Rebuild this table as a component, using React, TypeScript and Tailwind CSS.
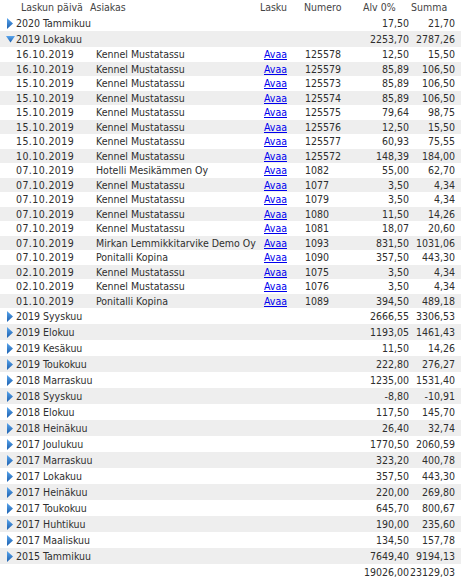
import React from "react";

type Detail = [string, string, string, string, string];
const top: [string, string, string, boolean][] = [
  ["2020 Tammikuu", "17,50", "21,70", false],
  ["2019 Lokakuu", "2253,70", "2787,26", true],
];
const details: Detail[] = [
  ["16.10.2019", "Kennel Mustatassu", "125578", "12,50", "15,50"],
  ["16.10.2019", "Kennel Mustatassu", "125579", "85,89", "106,50"],
  ["15.10.2019", "Kennel Mustatassu", "125573", "85,89", "106,50"],
  ["15.10.2019", "Kennel Mustatassu", "125574", "85,89", "106,50"],
  ["15.10.2019", "Kennel Mustatassu", "125575", "79,64", "98,75"],
  ["15.10.2019", "Kennel Mustatassu", "125576", "12,50", "15,50"],
  ["15.10.2019", "Kennel Mustatassu", "125577", "60,93", "75,55"],
  ["10.10.2019", "Kennel Mustatassu", "125572", "148,39", "184,00"],
  ["07.10.2019", "Hotelli Mesikämmen Oy", "1082", "55,00", "62,70"],
  ["07.10.2019", "Kennel Mustatassu", "1077", "3,50", "4,34"],
  ["07.10.2019", "Kennel Mustatassu", "1079", "3,50", "4,34"],
  ["07.10.2019", "Kennel Mustatassu", "1080", "11,50", "14,26"],
  ["07.10.2019", "Kennel Mustatassu", "1081", "18,07", "20,60"],
  ["07.10.2019", "Mirkan Lemmikkitarvike Demo Oy", "1093", "831,50", "1031,06"],
  ["07.10.2019", "Ponitalli Kopina", "1090", "357,50", "443,30"],
  ["02.10.2019", "Kennel Mustatassu", "1075", "3,50", "4,34"],
  ["02.10.2019", "Kennel Mustatassu", "1076", "3,50", "4,34"],
  ["01.10.2019", "Ponitalli Kopina", "1089", "394,50", "489,18"],
];
const months: [string, string, string][] = [
  ["2019 Syyskuu", "2666,55", "3306,53"],
  ["2019 Elokuu", "1193,05", "1461,43"],
  ["2019 Kesäkuu", "11,50", "14,26"],
  ["2019 Toukokuu", "222,80", "276,27"],
  ["2018 Marraskuu", "1235,00", "1531,40"],
  ["2018 Syyskuu", "-8,80", "-10,91"],
  ["2018 Elokuu", "117,50", "145,70"],
  ["2018 Heinäkuu", "26,40", "32,74"],
  ["2017 Joulukuu", "1770,50", "2060,59"],
  ["2017 Marraskuu", "323,20", "400,78"],
  ["2017 Lokakuu", "357,50", "443,30"],
  ["2017 Heinäkuu", "220,00", "269,80"],
  ["2017 Toukokuu", "645,70", "800,67"],
  ["2017 Huhtikuu", "190,00", "235,60"],
  ["2017 Maaliskuu", "134,50", "157,78"],
  ["2015 Tammikuu", "7649,40", "9194,13"],
];

function Arrow({ open }: { open: boolean }) {
  if (open)
    return (
      <svg width="9" height="7" viewBox="0 0 9 7" className="shrink-0">
        <defs>
          <linearGradient id="gd" x1="0" y1="0" x2="0" y2="1">
            <stop offset="0" stopColor="#5aa6ee" />
            <stop offset="1" stopColor="#1b5fae" />
          </linearGradient>
        </defs>
        <polygon points="0,0 9,0 4.5,6.5" fill="url(#gd)" />
      </svg>
    );
  return (
    <svg width="6" height="11" viewBox="0 0 6 11" className="shrink-0">
      <defs>
        <linearGradient id="gr" x1="0" y1="0" x2="0" y2="1">
          <stop offset="0" stopColor="#5aa6ee" />
          <stop offset="1" stopColor="#1b5fae" />
        </linearGradient>
      </defs>
      <polygon points="0,0 6,5.5 0,11" fill="url(#gr)" />
    </svg>
  );
}

function GroupRow({ label, a, b, open, gray }: { label: string; a: string; b: string; open: boolean; gray: boolean }) {
  return (
    <div className={`flex h-[16px] items-center ${gray ? "bg-[#eeeeee]" : "bg-white"}`}>
      <div className="flex w-[360px] items-center">
        <div className="flex w-[16px] items-center justify-center pl-[4px]">
          <Arrow open={open} />
        </div>
        <span>{label}</span>
      </div>
      <div className="w-[50px] pr-[1px] text-right">{a}</div>
      <div className="w-[46px] pr-[1px] text-right">{b}</div>
    </div>
  );
}

export default function App() {
  let idx = 0;
  return (
    <div
      className="w-[461px] h-[580px] bg-white text-[#2e2e2e] text-[10.5px] leading-none overflow-hidden"
      style={{ fontFamily: '"DejaVu Sans Condensed", "DejaVu Sans", sans-serif' }}
    >
      <div className="flex h-[15px] items-center text-[#444444]">
        <div className="w-[90px] pl-[21px]">Laskun päivä</div>
        <div className="w-[165px]">Asiakas</div>
        <div className="w-[45px] pr-[13px] text-right">Lasku</div>
        <div className="w-[60px] pl-[4px]">Numero</div>
        <div className="w-[50px] pl-[3px]">Alv 0%</div>
        <div className="w-[46px] pl-[1px]">Summa</div>
      </div>
      {top.map((t) => {
        const g = idx++ % 2 === 1;
        return <GroupRow key={t[0]} label={t[0]} a={t[1]} b={t[2]} open={t[3]} gray={g} />;
      })}
      {details.map((d, i) => {
        const g = idx++ % 2 === 1;
        return (
          <div key={i} className={`flex h-[14.5px] items-center ${g ? "bg-[#eeeeee]" : "bg-white"}`}>
            <div className="w-[90px] pl-[16px] tracking-[0.4px]">{d[0]}</div>
            <div className="w-[165px] pl-[6px] whitespace-nowrap">{d[1]}</div>
            <div className="w-[45px] pr-[13px] text-right">
              <a href="#" className="text-[#0000ee] underline">Avaa</a>
            </div>
            <div className="w-[60px] pl-[5px]">{d[2]}</div>
            <div className="w-[50px] pr-[1px] text-right">{d[3]}</div>
            <div className="w-[46px] pr-[1px] text-right">{d[4]}</div>
          </div>
        );
      })}
      {months.map((m) => {
        const g = idx++ % 2 === 1;
        return <GroupRow key={m[0]} label={m[0]} a={m[1]} b={m[2]} open={false} gray={g} />;
      })}
      <div className="flex h-[17px] items-center">
        <div className="w-[360px]" />
        <div className="w-[50px] pr-[1px] text-right">19026,00</div>
        <div className="w-[46px] pr-[1px] text-right">23129,03</div>
      </div>
    </div>
  );
}
